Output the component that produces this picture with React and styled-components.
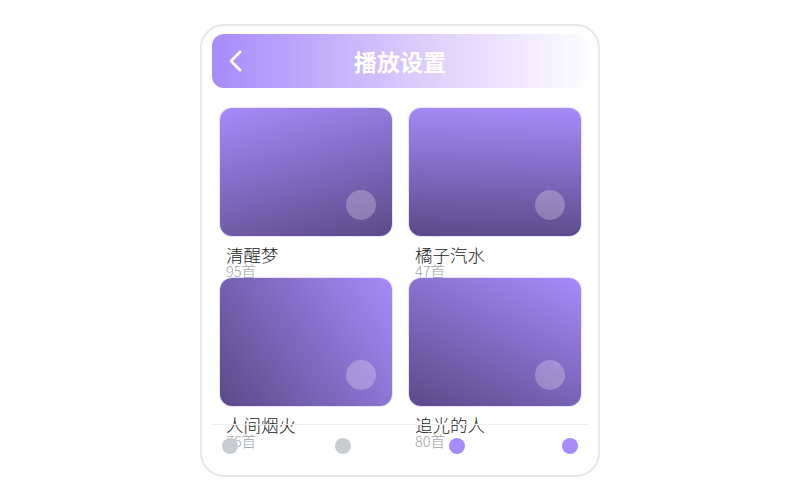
import React from 'react'
import styled, { createGlobalStyle } from 'styled-components'

const Global = createGlobalStyle`
  html, body {
    margin: 0;
    padding: 0;
    background: #fff;
  }
  body {
    font-family: "Noto Sans CJK SC", "Noto Sans", sans-serif;
  }
`

const Page = styled.div`
  width: 800px;
  height: 500px;
  display: flex;
  justify-content: center;
  padding-top: 24px;
  box-sizing: border-box;
`

const Frame = styled.div`
  position: relative;
  width: 400px;
  height: 453px;
  box-sizing: border-box;
  border: 2px solid #e6e7eb;
  border-radius: 24px;
  padding: 8px 10px;
  overflow: hidden;
  background: #fff;
`

const Header = styled.div`
  position: relative;
  height: 54px;
  border-radius: 12px;
  background: linear-gradient(90deg, #a78bfa 0%, #d9cdfc 55%, #fdfcff 100%);
  display: flex;
  align-items: center;
  justify-content: center;
`

const Back = styled.button`
  position: absolute;
  left: 15px;
  top: 50%;
  transform: translateY(-50%);
  border: 0;
  padding: 0;
  background: none;
  display: flex;
  cursor: pointer;
`

const Title = styled.h1`
  margin: 0;
  font-size: 23px;
  font-weight: 700;
  color: #fff;
`

const Grid = styled.div`
  display: grid;
  grid-template-columns: 1fr 1fr;
  column-gap: 17px;
  padding: 20px 7px 0 8px;
`

const Item = styled.div`
  display: flex;
  flex-direction: column;
  height: 170px;
`

const Cover = styled.div`
  position: relative;
  height: 128px;
  border-radius: 12px;
  background: linear-gradient(${p => p.$angle}deg, #a78bfa 0%, #5a4a88 100%);
  box-shadow: 0 0 0 1px rgba(167, 139, 250, 0.25);
`

const Dot = styled.span`
  position: absolute;
  right: 16px;
  bottom: 16px;
  width: 30px;
  height: 30px;
  border-radius: 50%;
  background: rgba(255, 255, 255, 0.25);
`

const Name = styled.div`
  margin-top: 10px;
  padding-left: 6px;
  font-size: 17.5px;
  font-weight: 300;
  line-height: 18px;
  color: #222;
`

const Count = styled.div`
  padding-left: 6px;
  font-size: 14.5px;
  font-weight: 300;
  line-height: 14px;
  color: #a0a4ab;
`

const TabBar = styled.div`
  position: absolute;
  left: 10px;
  right: 10px;
  bottom: 0;
  height: 51px;
  box-sizing: border-box;
  border-top: 1px solid #eceef1;
  padding: 13px 10px 0;
  display: flex;
  justify-content: space-between;
  align-items: flex-start;
`

const Tab = styled.span`
  width: 16px;
  height: 16px;
  border-radius: 50%;
  background: ${p => (p.$active ? '#a78bfa' : '#c9cdd2')};
`

const playlists = [
  { name: '清醒梦', count: 95, angle: 165 },
  { name: '橘子汽水', count: 47, angle: 182 },
  { name: '人间烟火', count: 76, angle: 235 },
  { name: '追光的人', count: 80, angle: 205 },
]

const tabs = [false, false, true, true]

export default function App() {
  return (
    <>
      <Global />
      <Page>
        <Frame>
          <Header>
            <Back aria-label="返回">
              <svg width="16" height="26" viewBox="0 0 16 26" fill="none">
                <polyline
                  points="13,4 4,13 13,22"
                  stroke="#fff"
                  strokeWidth="2.8"
                  strokeLinecap="round"
                  strokeLinejoin="round"
                />
              </svg>
            </Back>
            <Title>播放设置</Title>
          </Header>
          <Grid>
            {playlists.map(p => (
              <Item key={p.name}>
                <Cover $angle={p.angle}>
                  <Dot />
                </Cover>
                <Name>{p.name}</Name>
                <Count>{p.count}首</Count>
              </Item>
            ))}
          </Grid>
          <TabBar>
            {tabs.map((active, i) => (
              <Tab key={i} $active={active} />
            ))}
          </TabBar>
        </Frame>
      </Page>
    </>
  )
}
